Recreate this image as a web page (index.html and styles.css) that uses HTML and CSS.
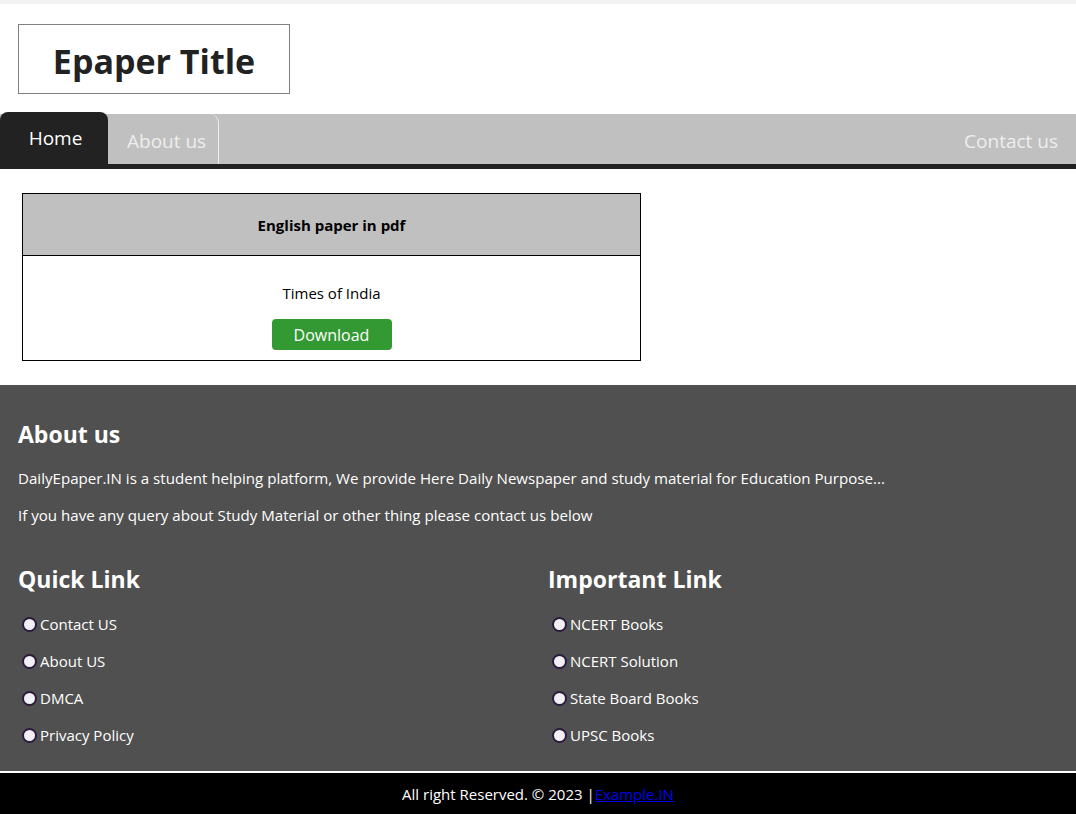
FILE: index.html
```html
<!DOCTYPE html>
<html lang="en">
<head>
<meta charset="utf-8">
<title>Epaper</title>
<link rel="stylesheet" href="styles.css">
</head>
<body>
<div class="topline"></div>
<header class="header">
  <div class="logo"><h1>Epaper Title</h1></div>
</header>
<nav class="nav">
  <a class="tab active" href="#">Home</a>
  <a class="tab" href="#">About us</a>
  <a class="tab right" href="#">Contact us</a>
</nav>
<main class="main">
  <div class="card">
    <div class="card-head">English paper in pdf</div>
    <div class="card-body">
      <p class="paper">Times of India</p>
      <a class="btn" href="#">Download</a>
    </div>
  </div>
</main>
<footer class="footer">
  <h2>About us</h2>
  <p>DailyEpaper.IN is a student helping platform, We provide Here Daily Newspaper and study material for Education Purpose...</p>
  <p>If you have any query about Study Material or other thing please contact us below</p>
  <div class="cols">
    <div class="col">
      <h2>Quick Link</h2>
      <ul>
        <li><span class="dot"></span>Contact US</li>
        <li><span class="dot"></span>About US</li>
        <li><span class="dot"></span>DMCA</li>
        <li><span class="dot"></span>Privacy Policy</li>
      </ul>
    </div>
    <div class="col">
      <h2>Important Link</h2>
      <ul>
        <li><span class="dot"></span>NCERT Books</li>
        <li><span class="dot"></span>NCERT Solution</li>
        <li><span class="dot"></span>State Board Books</li>
        <li><span class="dot"></span>UPSC Books</li>
      </ul>
    </div>
  </div>
</footer>
<div class="copy">All right Reserved. © 2023 |<a href="#">Example.IN</a></div>
</body>
</html>
```
FILE: styles.css
```css
* { box-sizing: border-box; }
html, body { margin: 0; padding: 0; }
body {
  font-family: "Open Sans", "Noto Sans", sans-serif;
  font-size: 16px;
  color: #000;
  background: #fff;
}
.topline { height: 4px; background: #f2f2f2; }
.header { padding: 20px 18px 18px; }
.logo {
  width: 272px;
  height: 70px;
  border: 1px solid #808080;
  display: flex;
  align-items: center;
  justify-content: center;
  padding-top: 4px;
}
.logo h1 {
  margin: 0;
  font-size: 34px;
  font-weight: 700;
  color: #222;
}
.nav {
  display: flex;
  align-items: flex-end;
  height: 57px;
  background: linear-gradient(#fff 0 2px, #c0c0c0 2px);
  border-bottom: 5px solid #222;
}
.tab {
  display: block;
  text-decoration: none;
  color: #eee;
  font-size: 19px;
  height: 50px;
  line-height: 54px;
  padding: 0 12px 0 19px;
  border-right: 1px solid #eee;
  border-top-right-radius: 9px;
}
.tab.active {
  height: 52px;
  line-height: 52px;
  background: #222;
  color: #fff;
  width: 108px;
  text-align: center;
  padding: 0 0 0 3px;
  border: none;
  border-radius: 8px 8px 0 0;
}
.tab.right {
  margin-left: auto;
  border: none;
  padding: 0 18px 0 0;
}
.main { padding: 24px 22px 24px; }
.card {
  width: 619px;
  border: 1px solid #000;
}
.card-head {
  background: #c0c0c0;
  height: 62px;
  border-bottom: 1px solid #000;
  display: flex;
  align-items: center;
  justify-content: center;
  font-weight: 700;
  font-size: 15px;
}
.card-body {
  text-align: center;
  padding: 25px 0 10px;
}
.paper { margin: 0 0 14px; font-size: 15px; line-height: 24px; }
.btn {
  display: inline-block;
  width: 120px;
  height: 31px;
  line-height: 32px;
  background: #339933;
  color: #fff;
  text-decoration: none;
  border-radius: 4px;
  font-size: 16px;
}
.footer {
  background: #505050;
  color: #fff;
  padding: 20px 18px 18px;
  border-bottom: 2px solid #fff;
}
.footer h2 {
  font-size: 23px;
  margin: 13px 0 16px;
  font-weight: 700;
}
.footer p { margin: 0 0 13px; line-height: 24px; font-size: 15.1px; }
.cols {
  display: grid;
  grid-template-columns: 530px 1fr;
  margin-top: 36px;
}
.cols h2 { margin: 0 0 10px; }
.cols ul { list-style: none; margin: 0; padding: 0; }
.cols li {
  display: flex;
  align-items: center;
  gap: 3px;
  height: 37px;
  font-size: 15px;
}
.dot {
  width: 15px;
  height: 15px;
  border-radius: 50%;
  background: #f2f0f5;
  border: 2px solid #2d1b3f;
  margin: 2px 0 0 4px;
}
.copy {
  background: #000;
  color: #fff;
  text-align: center;
  height: 42px;
  line-height: 42px;
  font-size: 15px;
}
.copy a { color: #0000ee; }
```
